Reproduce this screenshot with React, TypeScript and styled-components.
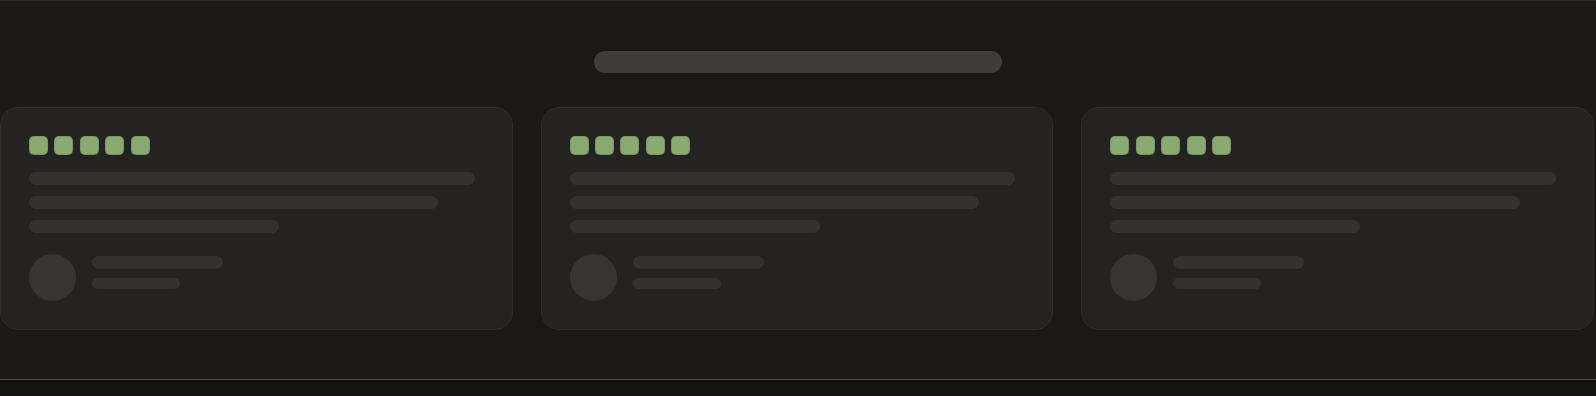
import React from "react";
import styled, { createGlobalStyle } from "styled-components";

const Global = createGlobalStyle`
  html, body { margin: 0; padding: 0; background: #121211; }
  body { font-family: "Inter", "Liberation Sans", sans-serif; }
`;

const Section = styled.section`
  background: #1a1917;
  border-top: 1px solid #2a2a28;
  border-bottom: 1px solid #52514e;
  padding: 50px 0 49px;
  display: flex;
  flex-direction: column;
  align-items: center;
`;

const TitleBar = styled.div`
  width: 408px;
  height: 22px;
  border-radius: 11px;
  background: #3e3d3a;
`;

const Grid = styled.div`
  margin-top: 34px;
  width: calc(100% - 2px);
  align-self: flex-start;
  display: grid;
  grid-template-columns: repeat(3, 1fr);
  gap: 28px;
`;

const Card = styled.div`
  background: #242321;
  border: 1px solid #2f2e2c;
  border-radius: 18px;
  padding: 28px;
  display: flex;
  flex-direction: column;
`;

const Stars = styled.div`
  display: flex;
  gap: 6.4px;
`;

const Star = styled.div`
  width: 19px;
  height: 19px;
  border-radius: 5px;
  background: #89aa70;
  box-shadow: inset 0 0 0 1px rgba(0, 0, 0, 0.12);
`;

const Lines = styled.div`
  margin-top: 17px;
  display: flex;
  flex-direction: column;
  gap: 11px;
`;

const Line = styled.div<{ $w: number }>`
  width: ${(p) => p.$w}%;
  height: 13px;
  border-radius: 7px;
  background: #33322f;
`;

const Author = styled.div`
  margin-top: 21px;
  display: flex;
  gap: 16px;
  align-items: flex-start;
`;

const Avatar = styled.div`
  width: 47px;
  height: 47px;
  border-radius: 50%;
  background: #363532;
  flex-shrink: 0;
`;

const Meta = styled.div`
  padding-top: 1.5px;
  display: flex;
  flex-direction: column;
  gap: 9px;
`;

const Bar = styled.div<{ $w: number; $h: number }>`
  width: ${(p) => p.$w}px;
  height: ${(p) => p.$h}px;
  border-radius: 7px;
  background: #33322f;
`;

const Footer = styled.div`
  height: 16px;
  background: #121211;
`;

const TestimonialCard = () => (
  <Card>
    <Stars>
      {[0, 1, 2, 3, 4].map((i) => (
        <Star key={i} />
      ))}
    </Stars>
    <Lines>
      <Line $w={98} />
      <Line $w={90} />
      <Line $w={55} />
    </Lines>
    <Author>
      <Avatar />
      <Meta>
        <Bar $w={131} $h={13} />
        <Bar $w={88} $h={11.5} />
      </Meta>
    </Author>
  </Card>
);

export default function App() {
  return (
    <>
      <Global />
      <Section>
        <TitleBar />
        <Grid>
          <TestimonialCard />
          <TestimonialCard />
          <TestimonialCard />
        </Grid>
      </Section>
      <Footer />
    </>
  );
}
